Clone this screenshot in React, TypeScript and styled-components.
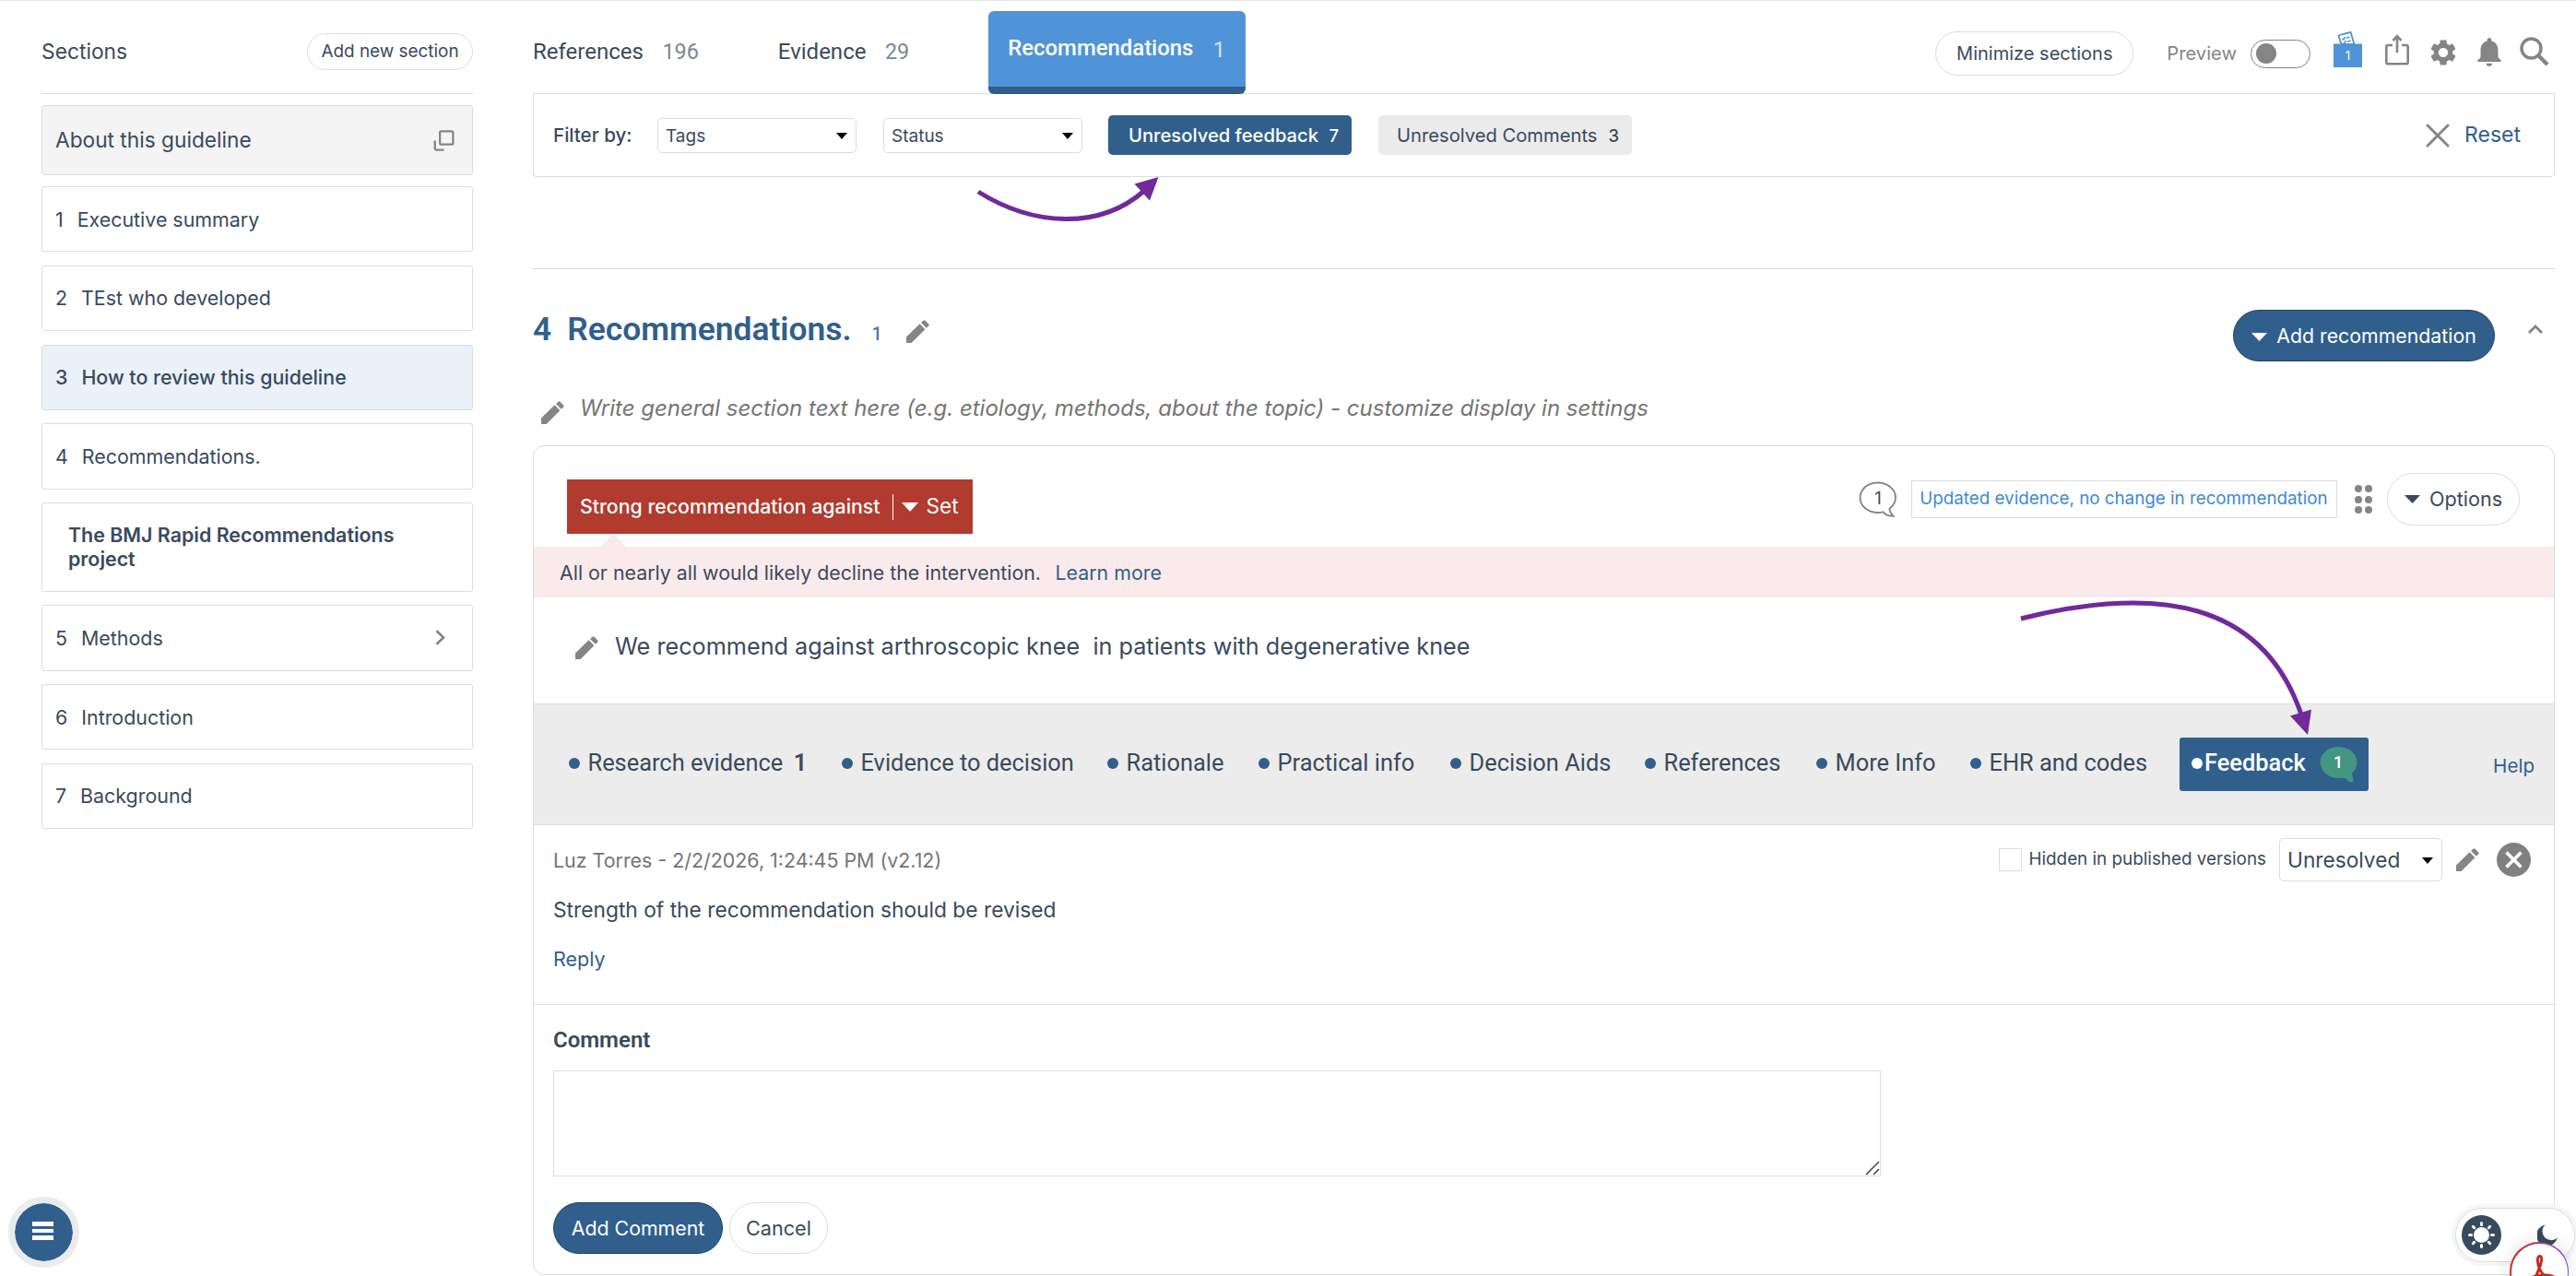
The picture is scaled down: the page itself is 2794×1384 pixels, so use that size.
import React from "react";
import styled, { createGlobalStyle } from "styled-components";
import { MdSettings, MdNotifications } from "react-icons/md";

const color = {
  text: "#394a5d",
  link: "#2f5f8d",
  navy: "#315f8c",
  sky: "#4f93d8",
  grey: "#858585",
  line: "#dddddd",
  purple: "#702a99",
};

const GlobalStyle = createGlobalStyle`
  * { box-sizing: border-box; }
  body { margin: 0; background: #fff; }
  button, textarea { font-family: inherit; margin: 0; }
`;

const Page = styled.div`
  position: relative;
  width: 2794px;
  height: 1384px;
  overflow: hidden;
  display: flex;
  gap: 65px;
  padding: 0 23px 0 45px;
  border-top: 1px solid #e6e6e6;
  font-family: Inter, "Liberation Sans", sans-serif;
  color: ${color.text};
  line-height: 1;
  white-space: nowrap;
`;

/* ---------- sidebar ---------- */
const Sidebar = styled.aside`
  width: 468px;
  flex: none;
  display: flex;
  flex-direction: column;
`;
const SidebarHead = styled.div`
  height: 101px;
  padding-top: 10px;
  display: flex;
  align-items: center;
  justify-content: space-between;
  border-bottom: 1px solid ${color.line};
  font-size: 22.8px;
`;
const Pill = styled.button<{ $w: number; $h: number; $size: number; $primary?: boolean }>`
  width: ${(p) => p.$w}px;
  height: ${(p) => p.$h}px;
  padding: ${(p) => (p.$h === 56 ? 2 : 0)}px 0 0;
  display: flex;
  align-items: center;
  justify-content: center;
  gap: 10px;
  border-radius: ${(p) => p.$h / 2}px;
  border: 1px solid ${(p) => (p.$primary ? "#1f4263" : color.line)};
  background: ${(p) => (p.$primary ? color.navy : "#fff")};
  color: ${(p) => (p.$primary ? "#fff" : color.text)};
  font-size: ${(p) => p.$size}px;
  line-height: 1;
`;
const AboutCard = styled.div`
  margin-top: 12px;
  height: 76px;
  padding: 0 19px 0 14px;
  display: flex;
  align-items: center;
  justify-content: space-between;
  border: 1px solid ${color.line};
  border-radius: 3px;
  background: #f4f4f4;
  font-size: 22.7px;
`;
const SectionList = styled.ul`
  list-style: none;
  margin: 12px 0 0;
  padding: 0;
  display: flex;
  flex-direction: column;
  gap: 14.4px;
`;
const SectionItem = styled.li<{ $active?: boolean; $tall?: boolean }>`
  height: ${(p) => (p.$tall ? 96.6 : 71.4)}px;
  padding: 0 29px ${(p) => (p.$tall ? 1 : 0)}px ${(p) => (p.$tall ? 28 : 14)}px;
  display: flex;
  align-items: center;
  gap: 15px;
  border: 1px solid ${color.line};
  border-radius: 3px;
  background: ${(p) => (p.$active ? "#eaf1f9" : "#fff")};
  font-size: 21.4px;
  font-weight: ${(p) => (p.$tall ? 600 : p.$active ? 500 : 400)};
  line-height: 26px;
  white-space: ${(p) => (p.$tall ? "normal" : "nowrap")};
`;
const Grow = styled.span`
  flex: 1;
`;

/* ---------- header ---------- */
const Main = styled.main`
  width: 2193px;
  flex: none;
  display: flex;
  flex-direction: column;
`;
const Header = styled.header`
  height: 100px;
  display: flex;
`;
const Tab = styled.div<{ $ml?: number; $gap: number }>`
  margin-left: ${(p) => p.$ml ?? 0}px;
  padding-top: 10px;
  display: flex;
  align-items: center;
  gap: ${(p) => p.$gap}px;
  font-family: Roboto, "Liberation Sans", sans-serif;
  font-size: 24px;
`;
const Count = styled.span`
  position: relative;
  top: 1px;
  font-size: 23.4px;
  color: #7b8794;
`;
const ActiveTab = styled.div`
  margin: 11px 0 -2px 86px;
  width: 279px;
  height: 90px;
  padding: 0 22px 1px 21px;
  display: flex;
  align-items: center;
  justify-content: space-between;
  border-radius: 6px;
  border-bottom: 8px solid ${color.navy};
  background: ${color.sky};
  color: #fff;
  font-family: Roboto, "Liberation Sans", sans-serif;
  font-size: 23.9px;
  font-weight: 500;
  z-index: 1;
`;
const ActiveCount = styled.span`
  position: relative;
  top: 2px;
  font-weight: 400;
  color: #d5e6f7;
`;
const HeaderTools = styled.div`
  margin-left: auto;
  padding: 14px 6px 0 0;
  display: flex;
  align-items: center;
  color: ${color.grey};
`;
const PreviewLabel = styled.span`
  margin-left: 36px;
  font-size: 20.2px;
`;
const Toggle = styled.span`
  margin: 0 25px 0 15px;
  width: 65px;
  height: 31px;
  padding: 0 5px;
  display: flex;
  align-items: center;
  border: 1.5px solid ${color.grey};
  border-radius: 16px;
`;
const Knob = styled.i`
  width: 22px;
  height: 22px;
  border-radius: 50%;
  background: ${color.grey};
`;
const ToolIcons = styled.div`
  display: flex;
  align-items: center;
`;
const IconSlot = styled.span<{ $ml: number; $up: number }>`
  margin-left: ${(p) => p.$ml}px;
  margin-bottom: ${(p) => p.$up * 2}px;
  display: flex;
`;

/* ---------- filters ---------- */
const FilterBar = styled.div`
  height: 91px;
  padding: 0 36px 0 21px;
  display: flex;
  align-items: center;
  border: 1px solid ${color.line};
  border-radius: 0 0 4px 4px;
`;
const FilterLabel = styled.span`
  width: 113px;
  padding-top: 2px;
  font-size: 20.6px;
  font-weight: 500;
`;
const SelectBox = styled.div<{ $w: number; $h: number; $size: number; $mr: number }>`
  width: ${(p) => p.$w}px;
  height: ${(p) => p.$h}px;
  margin-right: ${(p) => p.$mr}px;
  padding: 1px 9px 0 8px;
  display: flex;
  align-items: center;
  justify-content: space-between;
  border: 1px solid ${color.line};
  border-radius: 5px;
  background: #fff;
  font-size: ${(p) => p.$size}px;
`;
const FilterChip = styled.button<{ $on?: boolean }>`
  width: ${(p) => (p.$on ? 264 : 275)}px;
  height: 43px;
  margin-right: 29px;
  padding: 1px 14px 0 ${(p) => (p.$on ? 22 : 20)}px;
  display: flex;
  align-items: center;
  justify-content: space-between;
  border: 0;
  border-radius: 5px;
  background: ${(p) => (p.$on ? color.navy : "#ebebeb")};
  color: ${(p) => (p.$on ? "#fff" : color.text)};
  font-size: 20.2px;
  font-weight: ${(p) => (p.$on ? 500 : 400)};
  line-height: 1;
`;
const ChipCount = styled.span`
  font-size: 18.5px;
  font-weight: 500;
`;
const Reset = styled.a`
  margin-left: auto;
  display: flex;
  align-items: center;
  gap: 16px;
  color: ${color.link};
  font-size: 23px;
`;

/* ---------- section heading ---------- */
const SectionHead = styled.div`
  margin-top: 99px;
  height: 131px;
  padding: 0 13px 0 0;
  display: flex;
  align-items: flex-start;
  border-top: 1px solid ${color.line};
`;
const Title = styled.h2`
  margin: 0;
  padding-top: 48px;
  display: flex;
  align-items: baseline;
  color: ${color.navy};
  font-family: Roboto, "Liberation Sans", sans-serif;
  font-size: 35.4px;
  font-weight: 600;
`;
const TitleText = styled.span`
  margin-left: 17px;
`;
const TitleCount = styled.span`
  margin: 0 26px 0 22px;
  font-size: 20px;
  font-weight: 500;
  color: #5079a3;
`;
const HeadPencil = styled.span`
  padding-top: 55px;
`;
const HeadActions = styled.div`
  margin-left: auto;
  padding-top: 44px;
  display: flex;
  gap: 36px;
`;
const CollapseIcon = styled.span`
  padding-top: 12px;
`;
const SectionText = styled.div`
  height: 61px;
  padding-left: 9px;
  display: flex;
  align-items: flex-start;
  color: #757575;
  font-size: 24px;
  font-style: italic;
`;
const SectionTextPencil = styled.span`
  width: 42px;
  padding-top: 13px;
`;
const SectionTextBody = styled.span`
  padding-top: 9px;
`;

/* ---------- recommendation card ---------- */
const Card = styled.section`
  height: 900px;
  display: flex;
  flex-direction: column;
  border: 1px solid ${color.line};
  border-radius: 12px;
`;
const CardTop = styled.div`
  height: 109px;
  padding: 0 37px 0 36px;
  display: flex;
  align-items: flex-start;
  justify-content: space-between;
`;
const Strength = styled.div`
  margin-top: 36px;
  width: 440px;
  height: 59px;
  padding: 0 13px 0 14px;
  display: flex;
  align-items: center;
  background: #b03b2e;
  color: #fff;
  font-size: 21.3px;
  font-weight: 500;
`;
const StrengthDivider = styled.i`
  width: 1px;
  height: 28px;
  margin: 0 9px 0 13px;
  background: #fff;
`;
const StrengthSet = styled.span`
  margin-left: 9px;
  font-size: 22.6px;
  font-weight: 400;
`;
const CardActions = styled.div`
  padding-top: 29px;
  display: flex;
  align-items: center;
`;
const UpdateTag = styled.span`
  width: 462px;
  height: 41px;
  margin: 0 19px 0 15px;
  display: flex;
  align-items: center;
  justify-content: center;
  border: 1px solid ${color.line};
  color: #4089d6;
  font-size: 18.8px;
`;
const DotGrid = styled.span`
  margin-right: 16px;
  display: grid;
  grid-template-columns: repeat(2, 8px);
  gap: 3.5px;
`;
const GridDot = styled.i`
  width: 8px;
  height: 8px;
  border-radius: 50%;
  background: ${color.grey};
`;
const Explain = styled.div`
  position: relative;
  height: 55px;
  padding: 2px 0 0 28px;
  display: flex;
  align-items: center;
  gap: 15.5px;
  background: #fbeaeb;
  font-size: 21.35px;
  &::before {
    content: "";
    position: absolute;
    left: 72px;
    top: -14px;
    border: solid transparent;
    border-width: 0 14px 14px;
    border-bottom-color: #fbeaeb;
  }
`;
const Link = styled.a`
  color: ${color.link};
`;
const Statement = styled.div`
  height: 115px;
  padding: 0 0 7px 45px;
  display: flex;
  align-items: center;
  gap: 18px;
  font-size: 25.24px;
  white-space: pre;
`;
const NavBar = styled.nav`
  height: 132px;
  padding: 0 21px 2px 38px;
  display: flex;
  align-items: center;
  border-top: 1px solid ${color.line};
  border-bottom: 1px solid ${color.line};
  background: #ececec;
  font-family: Roboto, "Liberation Sans", sans-serif;
  font-size: 25.4px;
`;
const NavItem = styled.span<{ $w: number }>`
  width: ${(p) => p.$w}px;
  display: flex;
  align-items: center;
  gap: 8.5px;
`;
const NavCount = styled.b`
  margin-left: 3px;
  font-weight: 600;
`;
const Bullet = styled.i<{ $light?: boolean }>`
  width: 12px;
  height: 12px;
  border-radius: 50%;
  flex: none;
  background: ${(p) => (p.$light ? "#fff" : color.navy)};
`;
const FeedbackTab = styled.span`
  width: 205px;
  height: 58px;
  margin-top: 2px;
  padding: 0 12px 2px 13px;
  display: flex;
  align-items: center;
  gap: 2px;
  border-radius: 3px;
  background: ${color.navy};
  color: #fff;
  font-weight: 500;
`;
const FeedbackBubble = styled.span`
  margin-left: auto;
  padding-top: 2px;
  display: flex;
`;
const HelpLink = styled.a`
  margin-left: auto;
  padding-top: 7px;
  color: ${color.link};
  font-family: Inter, "Liberation Sans", sans-serif;
  font-size: 20.6px;
`;

/* ---------- comments ---------- */
const Thread = styled.div`
  height: 195px;
  padding: 14px 25px 0 21px;
  display: flex;
  justify-content: space-between;
  align-items: flex-start;
  border-bottom: 1px solid ${color.line};
`;
const ThreadText = styled.div`
  padding-top: 14px;
  display: flex;
  flex-direction: column;
`;
const Author = styled.span`
  height: 53px;
  color: #757575;
  font-size: 21.4px;
`;
const Message = styled.span`
  height: 54px;
  font-size: 22.75px;
`;
const ReplyLink = styled.a`
  color: ${color.link};
  font-size: 21.5px;
`;
const ThreadTools = styled.div`
  display: flex;
  align-items: center;
`;
const HiddenLabel = styled.label`
  margin-right: 14px;
  display: flex;
  align-items: center;
  gap: 7px;
  font-size: 18.85px;
`;
const CheckBox = styled.i`
  width: 25px;
  height: 25px;
  border: 1px solid ${color.line};
`;
const CommentForm = styled.div`
  padding: 26px 21px 0;
  display: flex;
  flex-direction: column;
`;
const FormLabel = styled.label`
  height: 45px;
  font-family: Roboto, "Liberation Sans", sans-serif;
  font-size: 24px;
  font-weight: 600;
`;
const InputWrap = styled.div`
  position: relative;
  width: 1440px;
  height: 115px;
`;
const CommentInput = styled.textarea`
  display: block;
  width: 100%;
  height: 100%;
  border: 1px solid ${color.line};
  outline: none;
  resize: none;
`;
const Grip = styled.svg`
  position: absolute;
  right: 1px;
  bottom: 1px;
`;
const FormActions = styled.div`
  margin-top: 28px;
  display: flex;
  gap: 7px;
`;

/* ---------- floating pieces ---------- */
const MenuFab = styled.button`
  position: absolute;
  left: 9px;
  top: 1297px;
  width: 77px;
  height: 77px;
  padding: 0 2px 3px 0;
  display: flex;
  flex-direction: column;
  align-items: center;
  justify-content: center;
  gap: 3px;
  border: 7px solid #e9ebed;
  border-radius: 50%;
  background: ${color.navy};
  background-clip: padding-box;
`;
const MenuBar = styled.i`
  width: 23px;
  height: 4.5px;
  background: #fff;
`;
const ThemeSwitch = styled.div`
  position: absolute;
  left: 2663px;
  top: 1309px;
  width: 130px;
  height: 59px;
  padding: 0 18px 0 6px;
  display: flex;
  align-items: center;
  justify-content: space-between;
  border: 1px solid ${color.line};
  border-radius: 30px;
  background: #fff;
  box-shadow: 0 0 0 4px #f6f6f6;
`;
const PdfBadge = styled.div`
  position: absolute;
  left: 2722px;
  top: 1346px;
  width: 64px;
  height: 64px;
  padding: 1.5px;
  border-radius: 50%;
  background: linear-gradient(90deg, #c8362f, #a83a78 50%, #7d4fe0);
  box-shadow: 0 0 20px rgba(0, 0, 0, 0.12);
`;
const PdfInner = styled.div`
  width: 100%;
  height: 100%;
  display: flex;
  justify-content: center;
  padding-top: 11px;
  border-radius: 50%;
  background: #fff;
`;
const Annotation = styled.svg<{ $x: number; $y: number }>`
  position: absolute;
  left: ${(p) => p.$x}px;
  top: ${(p) => p.$y}px;
  pointer-events: none;
`;

const Pencil = () => (
  <svg width="25" height="25" viewBox="0 0 25 25" fill={color.grey}>
    <path d="M0 18.600 14.600 4.200 20.400 10.200 5.600 25H0Z" />
    <path d="M16 2.900 18.400.8Q19.400-.2 20.600.8L24.200 4.400Q25.200 5.500 24.200 6.500L21.800 8.800Z" />
  </svg>
);
const Caret = ({ w, h, fill }: { w: number; h: number; fill: string }) => (
  <svg width={w} height={h} viewBox="0 0 10 10" preserveAspectRatio="none" fill={fill}>
    <path d="M0 0H10L5 10Z" />
  </svg>
);
const CopyIcon = () => (
  <svg width="23" height="23" viewBox="0 0 24 24" fill="none" stroke={color.grey} strokeWidth="2.400">
    <rect x="7.500" y="1.500" width="14.800" height="14.800" rx="1.500" />
    <path d="M1.800 12V20.700Q1.800 22.500 3.500 22.500H12" />
  </svg>
);
const Chevron = ({ up }: { up?: boolean }) =>
  up ? (
    <svg width="16" height="10" viewBox="0 0 16 10" fill="none" stroke={color.grey} strokeWidth="2.800">
      <path d="M1 9 8 2 15 9" />
    </svg>
  ) : (
    <svg width="11" height="17" viewBox="0 0 11 17" fill="none" stroke={color.grey} strokeWidth="2.600">
      <path d="M1.500 1.200 9 8.500 1.500 15.800" />
    </svg>
  );
const VoteIcon = () => (
  <svg width="31" height="39" viewBox="0 0 31 39">
    <rect y="13.500" width="31" height="25.500" fill={color.sky} />
    <path d="M5.500 4.500 18.500.8 22.500 14H8.500Z" fill="#fff" stroke={color.sky} strokeWidth="1.800" />
    <path d="M9.500 7.800 11 9 12.500 6M13.800 7.200 17.500 6M10.800 12 12 12.800 13.600 10M15 11.200 18.500 10" fill="none" stroke={color.sky} strokeWidth="1.500" />
    <text x="15.500" y="31" textAnchor="middle" fontSize="13.500" fill="#fff">1</text>
  </svg>
);
const ShareIcon = () => (
  <svg width="26" height="34" viewBox="0 0 26 34" fill="none" stroke={color.grey} strokeWidth="2.600">
    <path d="M8 12H3Q1.300 12 1.300 13.700V30.500Q1.300 32.300 3 32.300H23Q24.700 32.300 24.700 30.500V13.700Q24.700 12 23 12H18" />
    <path d="M13 20V3M8.500 7 13 2.200 17.500 7" />
  </svg>
);
const SearchIcon = () => (
  <svg width="32" height="32" viewBox="0 0 32 32" fill="none" stroke={color.grey}>
    <circle cx="12.500" cy="12.500" r="10.500" strokeWidth="3.400" />
    <path d="M20 20 30 30" strokeWidth="4.200" />
  </svg>
);
const CrossIcon = () => (
  <svg width="26" height="26" viewBox="0 0 26 26" fill="none" stroke={color.grey} strokeWidth="2.900" strokeLinecap="round">
    <path d="M2 2 24 24M24 2 2 24" />
  </svg>
);
const RemoveIcon = () => (
  <svg width="37" height="37" viewBox="0 0 37 37">
    <circle cx="18.500" cy="18.500" r="18.500" fill="#808080" />
    <path d="M10.500 10.500 26.500 26.500M26.500 10.500 10.500 26.500" stroke="#fff" strokeWidth="3.600" />
  </svg>
);
const OutlineBubble = () => (
  <svg width="42" height="40" viewBox="0 0 42 40">
    <path
      d="M20.500 1.500C31 1.500 40 8.500 40 17.500 40 22.500 37.500 26.500 33.500 29.500 33.500 32.500 35 35.500 37.500 37.800 32.500 38 28.500 36 26.500 33.300 24.500 33.800 22.500 34 20.500 34 10 34 1.500 27 1.500 17.800 1.500 8.500 10 1.500 20.500 1.500Z"
      fill="none"
      stroke={color.grey}
      strokeWidth="1.900"
    />
    <text x="21" y="24.500" textAnchor="middle" fontSize="18.500" fill={color.text}>1</text>
  </svg>
);
const GreenBubble = () => (
  <svg width="41" height="39" viewBox="0 0 41 39">
    <ellipse cx="20.500" cy="17" rx="20" ry="17" fill="#439682" />
    <path d="M22 33Q29 33.500 31 37 34 39.500 36.500 37.500 36.500 33 34.500 28Z" fill="#439682" />
    <text x="20" y="23" textAnchor="middle" fontSize="18" fontWeight="500" fill="#fff">1</text>
  </svg>
);
const SunIcon = () => (
  <svg width="43" height="43" viewBox="0 0 43 43">
    <circle cx="21.500" cy="21.500" r="21.500" fill={color.text} />
    <circle cx="21.500" cy="21.500" r="8.500" fill="#fff" />
    {[0, 45, 90, 135, 180, 225, 270, 315].map((a) => (
      <path key={a} d="M21.500 8.500V10.500" stroke="#fff" strokeWidth="3" strokeLinecap="round" transform={`rotate(${a} 21.500 21.500)`} />
    ))}
  </svg>
);
const MoonIcon = () => (
  <svg width="22" height="23" viewBox="0 0 22 23">
    <path d="M8.500.5A11.500 11.500 0 1 0 21.800 14.500 9.500 9.500 0 0 1 8.500.5Z" fill={color.text} />
  </svg>
);
const AcrobatIcon = () => (
  <svg width="40" height="40" viewBox="0 0 40 40" fill="none" stroke="#c4281c" strokeWidth="2.800">
    <path d="M4 33C1 30 9 25 20 23.500 30 22 38 24 37 27.500 36 31 28 27 23 20.500 18 14 17 3 20.500 2.500 24.500 2 22.500 12 17.500 22 12 32.500 6 36 4 33Z" />
  </svg>
);

const sections = [
  { n: "1", label: "Executive summary" },
  { n: "2", label: "TEst who developed" },
  { n: "3", label: "How to review this guideline", active: true },
  { n: "4", label: "Recommendations." },
  { label: "The BMJ Rapid Recommendations project", tall: true },
  { n: "5", label: "Methods", more: true },
  { n: "6", label: "Introduction" },
  { n: "7", label: "Background" },
];

const navItems = [
  { label: "Research evidence", count: "1", w: 296 },
  { label: "Evidence to decision", w: 288 },
  { label: "Rationale", w: 164 },
  { label: "Practical info", w: 208 },
  { label: "Decision Aids", w: 211 },
  { label: "References", w: 186 },
  { label: "More Info", w: 167 },
  { label: "EHR and codes", w: 227 },
];

export default function App() {
  return (
    <Page>
      <GlobalStyle />
      <Sidebar>
        <SidebarHead>
          Sections
          <Pill $w={180} $h={40} $size={18.9}>Add new section</Pill>
        </SidebarHead>
        <AboutCard>
          About this guideline
          <CopyIcon />
        </AboutCard>
        <SectionList>
          {sections.map((s) => (
            <SectionItem key={s.label} $active={s.active} $tall={s.tall}>
              {s.n && <span>{s.n}</span>}
              <span>{s.label}</span>
              {s.more && (
                <>
                  <Grow />
                  <Chevron />
                </>
              )}
            </SectionItem>
          ))}
        </SectionList>
      </Sidebar>

      <Main>
        <Header>
          <Tab $gap={20.5}>
            References <Count>196</Count>
          </Tab>
          <Tab $ml={86} $gap={20.5}>
            Evidence <Count>29</Count>
          </Tab>
          <ActiveTab>
            Recommendations <ActiveCount>1</ActiveCount>
          </ActiveTab>
          <HeaderTools>
            <Pill $w={215} $h={48} $size={20}>Minimize sections</Pill>
            <PreviewLabel>Preview</PreviewLabel>
            <Toggle><Knob /></Toggle>
            <ToolIcons>
              <IconSlot $ml={0} $up={5}><VoteIcon /></IconSlot>
              <IconSlot $ml={25} $up={4}><ShareIcon /></IconSlot>
              <IconSlot $ml={20} $up={1}><MdSettings size={34} /></IconSlot>
              <IconSlot $ml={14} $up={2}><MdNotifications size={38} /></IconSlot>
              <IconSlot $ml={14} $up={2}><SearchIcon /></IconSlot>
            </ToolIcons>
          </HeaderTools>
        </Header>

        <FilterBar>
          <FilterLabel>Filter by:</FilterLabel>
          <SelectBox $w={216} $h={38} $size={19} $mr={29}>
            Tags <Caret w={12} h={7} fill="#000" />
          </SelectBox>
          <SelectBox $w={216} $h={38} $size={19} $mr={28}>
            Status <Caret w={12} h={7} fill="#000" />
          </SelectBox>
          <FilterChip $on>
            Unresolved feedback <ChipCount>7</ChipCount>
          </FilterChip>
          <FilterChip>
            Unresolved Comments <ChipCount>3</ChipCount>
          </FilterChip>
          <Reset>
            <CrossIcon /> Reset
          </Reset>
        </FilterBar>

        <SectionHead>
          <Title>
            4<TitleText>Recommendations.</TitleText>
            <TitleCount>1</TitleCount>
          </Title>
          <HeadPencil><Pencil /></HeadPencil>
          <HeadActions>
            <Pill $w={284} $h={56} $size={21.3} $primary>
              <Caret w={17} h={9} fill="#fff" /> Add recommendation
            </Pill>
            <CollapseIcon><Chevron up /></CollapseIcon>
          </HeadActions>
        </SectionHead>
        <SectionText>
          <SectionTextPencil><Pencil /></SectionTextPencil>
          <SectionTextBody>
            Write general section text here (e.g. etiology, methods, about the topic) - customize display in settings
          </SectionTextBody>
        </SectionText>

        <Card>
          <CardTop>
            <Strength>
              Strong recommendation against
              <StrengthDivider />
              <Caret w={18} h={10} fill="#fff" />
              <StrengthSet>Set</StrengthSet>
            </Strength>
            <CardActions>
              <OutlineBubble />
              <UpdateTag>Updated evidence, no change in recommendation</UpdateTag>
              <DotGrid>
                {[0, 1, 2, 3, 4, 5].map((i) => (
                  <GridDot key={i} />
                ))}
              </DotGrid>
              <Pill $w={144} $h={57} $size={21.6}>
                <Caret w={17} h={9} fill={color.text} /> Options
              </Pill>
            </CardActions>
          </CardTop>
          <Explain>
            <span>All or nearly all would likely decline the intervention.</span>
            <Link>Learn more</Link>
          </Explain>
          <Statement>
            <Pencil />
            <span>{"We recommend against arthroscopic knee\u00a0 in patients with degenerative knee"}</span>
          </Statement>
          <NavBar>
            {navItems.map((item) => (
              <NavItem key={item.label} $w={item.w}>
                <Bullet />
                {item.label}
                {item.count && <NavCount>{item.count}</NavCount>}
              </NavItem>
            ))}
            <FeedbackTab>
              <Bullet $light />
              Feedback
              <FeedbackBubble><GreenBubble /></FeedbackBubble>
            </FeedbackTab>
            <HelpLink>Help</HelpLink>
          </NavBar>
          <Thread>
            <ThreadText>
              <Author>Luz Torres - 2/2/2026, 1:24:45 PM (v2.12)</Author>
              <Message>Strength of the recommendation should be revised</Message>
              <ReplyLink>Reply</ReplyLink>
            </ThreadText>
            <ThreadTools>
              <HiddenLabel>
                <CheckBox /> Hidden in published versions
              </HiddenLabel>
              <SelectBox $w={177} $h={47} $size={22.7} $mr={15}>
                Unresolved <Caret w={12} h={7} fill="#000" />
              </SelectBox>
              <Pencil />
              <IconSlot $ml={19} $up={0}><RemoveIcon /></IconSlot>
            </ThreadTools>
          </Thread>
          <CommentForm>
            <FormLabel>Comment</FormLabel>
            <InputWrap>
              <CommentInput />
              <Grip width="16" height="16" viewBox="0 0 16 16" stroke="#444" strokeWidth="1.500">
                <path d="M1 15 15 1M9 15 15 9" />
              </Grip>
            </InputWrap>
            <FormActions>
              <Pill $w={184} $h={56} $size={21.3} $primary>Add Comment</Pill>
              <Pill $w={107} $h={56} $size={21.6}>Cancel</Pill>
            </FormActions>
          </CommentForm>
        </Card>
      </Main>

      <Annotation $x={1050} $y={184} width="220" height="70" viewBox="1050 185 220 70">
        <path d="M1061 208C1120 245 1192 250 1241 207" fill="none" stroke={color.purple} strokeWidth="5" />
        <path d="M1256.500 192 1230.500 199.500 1247 217.500Z" fill={color.purple} />
      </Annotation>
      <Annotation $x={2180} $y={639} width="340" height="165" viewBox="2180 640 340 165">
        <path d="M2192 671C2340 634 2454 652 2496 775" fill="none" stroke={color.purple} strokeWidth="5" />
        <path d="M2503 797 2484 776.500 2507 769.500Z" fill={color.purple} />
      </Annotation>

      <MenuFab>
        <MenuBar />
        <MenuBar />
        <MenuBar />
      </MenuFab>
      <ThemeSwitch>
        <SunIcon />
        <MoonIcon />
      </ThemeSwitch>
      <PdfBadge>
        <PdfInner><AcrobatIcon /></PdfInner>
      </PdfBadge>
    </Page>
  );
}
